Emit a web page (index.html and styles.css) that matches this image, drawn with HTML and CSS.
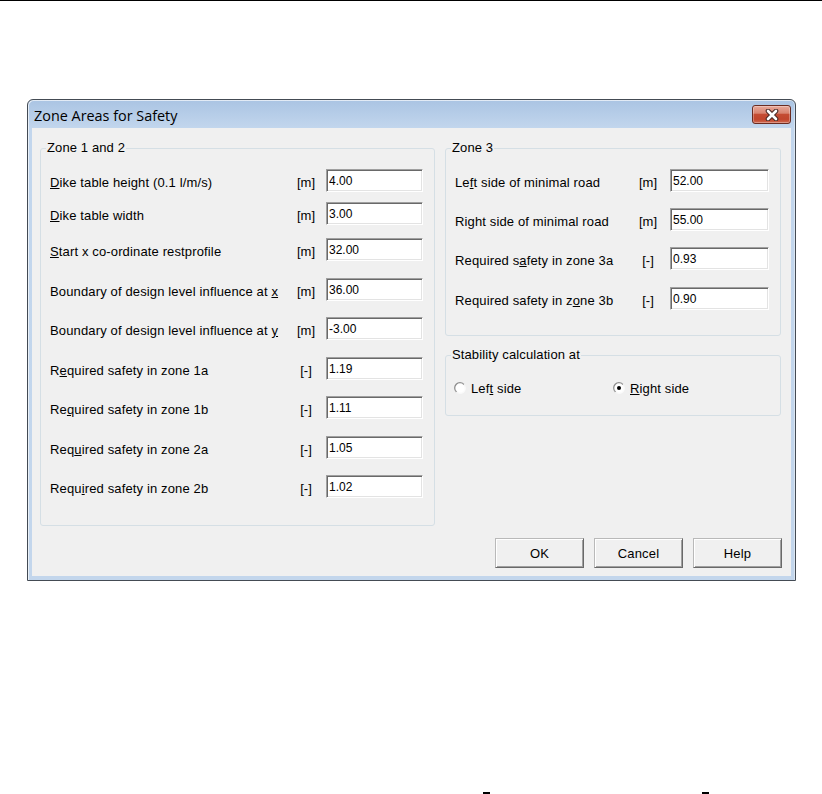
FILE: index.html
```html
<!DOCTYPE html>
<html>
<head>
<meta charset="utf-8">
<title>Zone Areas for Safety</title>
<link rel="stylesheet" href="styles.css">
</head>
<body>
<div class="topline"></div>
<div class="window">
  <div class="titlebar">
    <span class="title">Zone Areas for Safety</span>
    <button class="close" type="button" aria-label="Close">
      <svg width="14" height="12" viewBox="0 0 14 12">
        <path d="M3 2 L11 10 M11 2 L3 10" stroke="#4a2a25" stroke-width="4.6" stroke-linecap="round" fill="none"/>
        <path d="M3 2 L11 10 M11 2 L3 10" stroke="#ffffff" stroke-width="2.6" stroke-linecap="round" fill="none"/>
      </svg>
    </button>
  </div>
  <div class="client">
    <div class="main">
      <fieldset class="group group-left">
        <legend>Zone 1 and 2</legend>
        <div class="row"><span class="lbl"><u>D</u>ike table height (0.1 l/m/s)</span><span class="unit">[m]</span><input class="field" type="text" value="4.00"></div>
        <div class="row g10"><span class="lbl"><u>D</u>ike table width</span><span class="unit">[m]</span><input class="field" type="text" value="3.00"></div>
        <div class="row g13"><span class="lbl"><u>S</u>tart x co-ordinate restprofile</span><span class="unit">[m]</span><input class="field" type="text" value="32.00"></div>
        <div class="row g17"><span class="lbl">Boundary of design level influence at <u>x</u></span><span class="unit">[m]</span><input class="field" type="text" value="36.00"></div>
        <div class="row g16"><span class="lbl">Boundary of design level influence at <u>y</u></span><span class="unit">[m]</span><input class="field" type="text" value="-3.00"></div>
        <div class="row g17"><span class="lbl">R<u>e</u>quired safety in zone 1a</span><span class="unit">[-]</span><input class="field" type="text" value="1.19"></div>
        <div class="row g16"><span class="lbl">Re<u>q</u>uired safety in zone 1b</span><span class="unit">[-]</span><input class="field" type="text" value="1.11"></div>
        <div class="row g17"><span class="lbl">Req<u>u</u>ired safety in zone 2a</span><span class="unit">[-]</span><input class="field" type="text" value="1.05"></div>
        <div class="row g16"><span class="lbl">Requ<u>i</u>red safety in zone 2b</span><span class="unit">[-]</span><input class="field" type="text" value="1.02"></div>
      </fieldset>
      <div class="rightcol">
        <fieldset class="group group-right">
          <legend>Zone 3</legend>
          <div class="row"><span class="lbl">Le<u>f</u>t side of minimal road</span><span class="unit">[m]</span><input class="field" type="text" value="52.00"></div>
          <div class="row g16"><span class="lbl">Ri<u>g</u>ht side of minimal road</span><span class="unit">[m]</span><input class="field" type="text" value="55.00"></div>
          <div class="row g16"><span class="lbl">Required s<u>a</u>fety in zone 3a</span><span class="unit">[-]</span><input class="field" type="text" value="0.93"></div>
          <div class="row g17"><span class="lbl">Required safety in z<u>o</u>ne 3b</span><span class="unit">[-]</span><input class="field" type="text" value="0.90"></div>
        </fieldset>
        <fieldset class="group group-stab">
          <legend>Stability calculation at</legend>
          <div class="radios">
            <label class="radio">
              <svg width="12" height="12" viewBox="0 0 12 12">
                <defs>
                  <linearGradient id="rg1" x1="0" y1="0" x2="1" y2="1">
                    <stop offset="0" stop-color="#808080"/>
                    <stop offset="0.5" stop-color="#a0a0a0"/>
                    <stop offset="0.55" stop-color="#f4f4f4"/>
                    <stop offset="1" stop-color="#ffffff"/>
                  </linearGradient>
                </defs>
                <circle cx="6" cy="6" r="5.3" fill="#fff" stroke="url(#rg1)" stroke-width="1.3"/>
              </svg>
              <span>Lef<u>t</u> side</span>
            </label>
            <label class="radio">
              <svg width="12" height="12" viewBox="0 0 12 12">
                <circle cx="6" cy="6" r="5.3" fill="#fff" stroke="url(#rg1)" stroke-width="1.3"/>
                <circle cx="6" cy="6" r="2" fill="#000"/>
              </svg>
              <span><u>R</u>ight side</span>
            </label>
          </div>
        </fieldset>
      </div>
    </div>
    <div class="buttons">
      <button class="btn" type="button">OK</button>
      <button class="btn" type="button">Cancel</button>
      <button class="btn" type="button">Help</button>
    </div>
  </div>
</div>
<div class="footer"><span class="mark"></span><span class="mark mark2"></span></div>
</body>
</html>
```

FILE: styles.css
```css
* { box-sizing: border-box; }
html, body { margin: 0; padding: 0; background: #ffffff; }
body {
  width: 822px;
  height: 794px;
  overflow: hidden;
  font-family: "Liberation Sans", Arial, sans-serif;
  font-size: 13px;
  color: #000;
}
.topline { height: 1px; background: #000; }

.window {
  width: 769px;
  margin: 98px 0 0 27px;
  border: 1px solid #444b54;
  border-radius: 6px 6px 0 0;
  padding: 0 4px 4px;
  background: linear-gradient(to bottom, #aac4e3 0px, #c2d6ed 28px, #c3d6ec 100%);
  box-shadow: inset 1px 1px 0 rgba(255,255,255,0.65), inset -1px 0 0 rgba(255,255,255,0.4);
}
.titlebar {
  height: 28px;
  display: flex;
  justify-content: space-between;
  align-items: flex-start;
}
.title {
  font-family: "Open Sans", "Noto Sans", sans-serif;
  font-size: 14.4px;
  line-height: 20px;
  margin: 6px 0 0 2px;
  color: #000;
}
.close {
  width: 39px;
  height: 19px;
  margin-top: 5px;
  padding: 0;
  border: 1px solid #6a2c22;
  border-radius: 3px;
  background: linear-gradient(to bottom, #e8a899 0%, #d88470 42%, #c44c33 50%, #c1452d 78%, #d06a50 100%);
  box-shadow: inset 0 0 0 1px rgba(255,255,255,0.3);
  display: flex;
  align-items: center;
  justify-content: center;
}

.client {
  background: #f0f0f0;
  padding: 13px 9px 8px 8px;
}
.main {
  display: flex;
  align-items: flex-start;
  gap: 10px;
}
.group {
  margin: 0;
  min-width: 0;
  border: 1px solid #d5dfe5;
  border-radius: 3px;
  padding: 13px 11px 0 9px;
}
.group legend {
  padding: 0 1px 2px;
  margin-left: -4px;
  line-height: 13px;
  font-size: 13px;
  letter-spacing: 0.12px;
}
.group-left { width: 395px; padding-bottom: 27px; }
.rightcol { width: 336px; display: flex; flex-direction: column; }
.group-right { padding-bottom: 25px; }
.group-stab { margin-top: 12px; padding-top: 16px; padding-bottom: 20px; }

.row {
  display: flex;
  align-items: center;
  height: 23px;
}
.g10 { margin-top: 10px; }
.g13 { margin-top: 13px; }
.g16 { margin-top: 16px; }
.g17 { margin-top: 17px; }
.lbl {
  flex: 1;
  white-space: nowrap;
  padding-top: 4px;
  letter-spacing: 0.14px;
}
.unit {
  width: 30px;
  text-align: center;
  padding-top: 4px;
}
.field {
  width: 97px;
  height: 23px;
  margin: 0 0 0 5px;
  padding: 0 0 0 2px;
  font-family: "Liberation Sans", Arial, sans-serif;
  font-size: 12px;
  color: #000;
  background: #fff;
  border-style: solid;
  border-width: 1px;
  border-color: #a0a0a0 #ffffff #ffffff #a0a0a0;
  box-shadow: inset 1px 1px 0 #696969, inset -1px -1px 0 #e3e3e3;
  outline: none;
}
.group-right .field { width: 99px; margin-left: 7px; }

.radios {
  display: grid;
  grid-template-columns: 159px auto;
  height: 16px;
  align-items: center;
}
.radio {
  display: flex;
  align-items: center;
  gap: 5px;
  margin-left: -1px;
  letter-spacing: 0.14px;
}
.radio span { padding-top: 2px; }

.buttons {
  display: flex;
  justify-content: flex-end;
  gap: 10px;
  margin-top: 12px;
}
.btn {
  width: 89px;
  height: 30px;
  padding: 0;
  font-family: "Liberation Sans", Arial, sans-serif;
  font-size: 13px;
  letter-spacing: 0.2px;
  color: #000;
  background: #f0f0f0;
  border-style: solid;
  border-width: 1px;
  border-color: #b9b9b9 #696969 #696969 #b9b9b9;
  box-shadow: inset 1px 1px 0 #ffffff, inset -1px -1px 0 #a0a0a0;
}

.footer {
  display: flex;
  margin-top: 211px;
  padding-left: 483px;
}
.mark { width: 7px; height: 2px; background: #000; }
.mark2 { margin-left: 212px; }
```
